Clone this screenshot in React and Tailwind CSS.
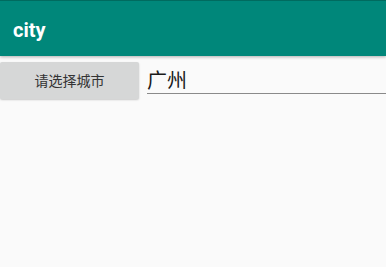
export default function App() {
  return (
    <div className="w-[386px] h-[267px] bg-[#fafafa] font-['Roboto','Noto_Sans_CJK_SC',sans-serif] overflow-hidden">
      <div className="h-[56px] bg-[#00877a] border-t border-[#006b5f] flex items-center px-[13px] pt-[2px] shadow-[0_1px_3px_rgba(0,0,0,0.3)]">
        <span className="text-white text-[20px] font-bold leading-none">city</span>
      </div>
      <div className="flex items-start mt-[6px]">
        <button className="w-[139px] h-[37px] bg-[#d6d7d7] rounded-[2px] shadow-[0_1px_2px_rgba(0,0,0,0.2)] text-[14px] text-[#333] font-['Noto_Sans_CJK_SC',sans-serif]">
          请选择城市
        </button>
        <div className="flex-1 ml-[8px] h-[32px] border-b border-[#8a8a8a] flex items-end pb-[3px]">
          <span className="text-[20px] text-[#1a1a1a] font-normal leading-none font-['Noto_Sans_CJK_SC',sans-serif]">广州</span>
        </div>
      </div>
    </div>
  )
}
